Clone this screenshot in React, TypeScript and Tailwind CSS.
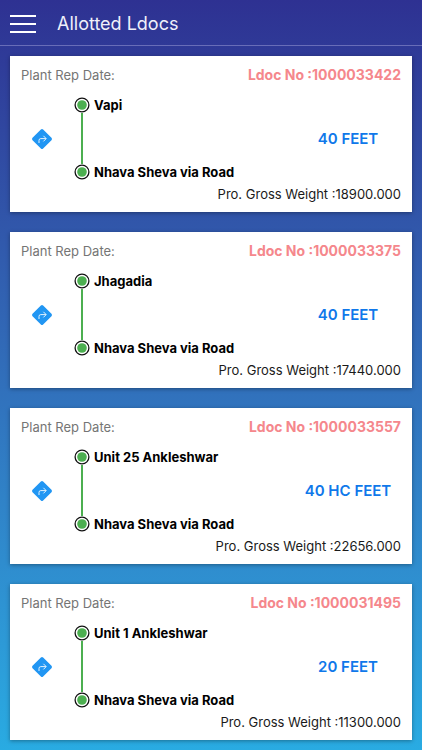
import React from "react";

const ldocs = [
  { no: "1000033422", from: "Vapi", to: "Nhava Sheva via Road", size: "40 FEET", weight: "18900.000" },
  { no: "1000033375", from: "Jhagadia", to: "Nhava Sheva via Road", size: "40 FEET", weight: "17440.000" },
  { no: "1000033557", from: "Unit 25 Ankleshwar", to: "Nhava Sheva via Road", size: "40 HC FEET", weight: "22656.000" },
  { no: "1000031495", from: "Unit 1 Ankleshwar", to: "Nhava Sheva via Road", size: "20 FEET", weight: "11300.000" },
];

const DirectionIcon = () => (
  <svg width="22" height="22" viewBox="0 0 22 22" fill="none" aria-hidden="true">
    <rect x="3.5" y="3.5" width="15" height="15" rx="1.6" fill="#2196f3" transform="rotate(45 11 11)" />
    <path d="M8 15V12.4Q8 10.6 9.8 10.6H15M12.4 7.8L15.2 10.6L12.4 13.4" stroke="#e3f2fd" strokeWidth="1" />
  </svg>
);

const StopDot = () => (
  <svg width="16" height="16" viewBox="0 0 16 16" className="shrink-0" aria-hidden="true">
    <circle cx="8" cy="8" r="6.9" fill="#fff" stroke="#111" strokeWidth="1.3" />
    <circle cx="8" cy="8" r="4.8" fill="#4caf50" />
  </svg>
);

const Stop = ({ name }: { name: string }) => (
  <div className="flex h-5 items-center gap-1">
    <StopDot />
    <p className="text-[13px] leading-5 font-bold whitespace-nowrap text-black">{name}</p>
  </div>
);

const LdocCard = ({ ldoc }: { ldoc: (typeof ldocs)[number] }) => (
  <article className="bg-white px-[11px] pt-[10px] pb-2 shadow-[0_1px_4px_rgba(0,0,0,0.35)]">
    <div className="flex h-[18px] items-center justify-between">
      <p className="text-[13px] leading-[18px] text-[#757575]">Plant Rep Date:</p>
      <p className="text-[14px] leading-[18px] font-bold text-[#f5878c]">Ldoc No :{ldoc.no}</p>
    </div>
    <div className="mt-[11px] flex items-center">
      <button type="button" aria-label="Directions" className="flex w-[42px] justify-center">
        <DirectionIcon />
      </button>
      <div className="ml-[11px] flex-1">
        <Stop name={ldoc.from} />
        <div className="-my-[2px] ml-[7px] h-[51px] w-[2px] bg-[#4caf50]" />
        <Stop name={ldoc.to} />
      </div>
      <p className="w-[106px] text-center text-[15px] leading-5 font-semibold text-[#0f78ea]">{ldoc.size}</p>
    </div>
    <p className="mt-[2px] text-right text-[13px] leading-5 text-[#1a1a1a]">Pro. Gross Weight :{ldoc.weight}</p>
  </article>
);

const App = () => {
  return (
    <div className="min-h-screen bg-gradient-to-b from-[#2e3192] to-[#29abe2] font-['Inter','Liberation_Sans',sans-serif]">
      <header className="flex h-[46px] items-center border-b border-[#686db8] px-[10px] pt-[2px]">
        <button type="button" aria-label="Menu" className="flex w-[26px] flex-col gap-[6px]">
          <span className="h-[2px] w-full bg-white" />
          <span className="h-[2px] w-full bg-white" />
          <span className="h-[2px] w-full bg-white" />
        </button>
        <h1 className="ml-[21px] text-[18px] text-[#f0f0fa]">Allotted Ldocs</h1>
      </header>
      <main className="flex flex-col gap-5 p-[10px]">
        {ldocs.map((ldoc) => (
          <LdocCard key={ldoc.no} ldoc={ldoc} />
        ))}
      </main>
    </div>
  );
};

export default App;
